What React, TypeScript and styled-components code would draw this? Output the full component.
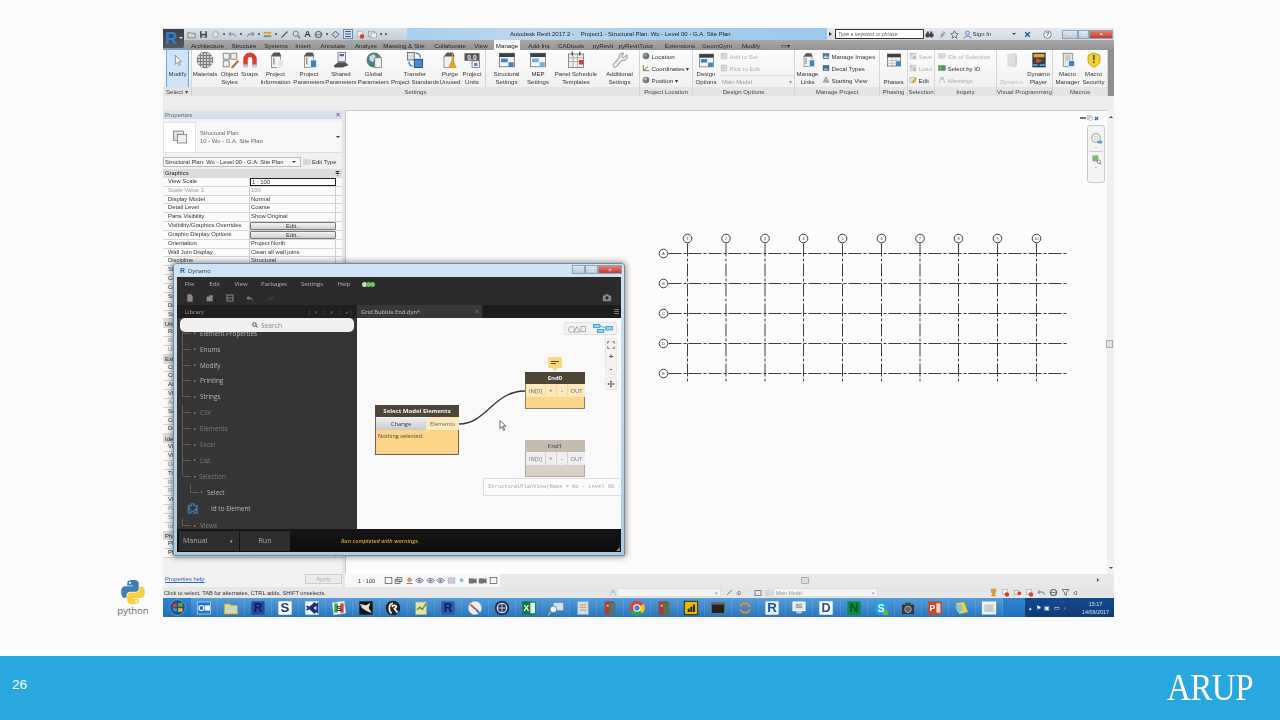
import React from 'react';
import styled, { createGlobalStyle } from 'styled-components';

const Global = createGlobalStyle`
  html, body { margin: 0; padding: 0; background: #fbfbfb; }
  #root { width: 1280px; height: 720px; overflow: hidden; }
  * { box-sizing: border-box; }
`;

const ui = `"Liberation Sans", Arial, sans-serif`;
const dyn = `"Open Sans", "Liberation Sans", sans-serif`;

const Slide = styled.div`display:flex;flex-direction:column;width:1280px;height:720px;background:#fbfbfb;font-family:${ui};`;
const Stage = styled.div`flex:1;display:flex;padding-top:28px;min-height:0;`;
const Brand = styled.div`width:163px;flex:none;align-self:flex-end;margin-bottom:39px;padding-left:103px;display:flex;flex-direction:column;align-items:center;`;
const BrandWord = styled.span`font:9.5px/12px "Open Sans",sans-serif;color:#666;margin-top:1px;width:60px;text-align:center;`;
const Footer = styled.div`height:64px;flex:none;background:#29a8e0;display:flex;align-items:center;justify-content:space-between;padding:0 27px 0 12px;color:#fff;`;
const PageNo = styled.span`font:13.5px/16px ${ui};margin-top:-6px;`;
const Arup = styled.span`font:33px/36px "Liberation Serif",serif;letter-spacing:-.5px;display:block;transform:scaleY(1.12);`;

const Shot = styled.div`position:relative;width:951px;height:589px;display:flex;flex-direction:column;filter:blur(.5px);font-size:5.6px;color:#333;background:#f0f0f0;overflow:hidden;`;

/* title bar */
const TitleBar = styled.div`height:12px;flex:none;display:flex;align-items:center;background:linear-gradient(#d9e2ea,#c3ced8);`;
const AppButton = styled.div`position:absolute;left:0;top:1px;width:21px;height:19px;background:linear-gradient(#3c4046,#555a60);border-radius:0 0 2px 0;color:#2f7fd0;font:bold 17px/19px ${ui};padding-left:2px;z-index:2;`;
const AppCaret = styled.span`position:absolute;right:1px;top:8px;border:2px solid transparent;border-top-color:#ddd;`;
const Quick = styled.div`width:244px;padding-left:24px;flex:none;display:flex;align-items:center;gap:3.1px;`;
const QuickDot = styled.span`width:2px;height:2px;background:#667;flex:none;`;
const QuickA = styled.span`font:bold 9px/9px ${ui};color:#333;flex:none;`;
const Glass = styled.div`width:420px;flex:none;height:12px;background:linear-gradient(90deg,#a7cff0,#bcd8ee 30%,#a8cfee 55%,#9cc8ec 100%);display:flex;align-items:center;padding-left:103px;font-size:6px;color:#222;white-space:pre;`;
const SearchWrap = styled.div`flex:1;display:flex;align-items:center;background:linear-gradient(#e4e9ee,#d4dbe2);height:12px;padding-left:2px;`;
const SearchArrow = styled.span`border:2px solid transparent;border-left:3px solid #333;flex:none;`;
const SearchBox = styled.div`width:89px;height:10px;background:#fff;border:1px solid #333;margin-left:1px;font:italic 5.2px/8px ${ui};color:#666;padding-left:2px;flex:none;`;
const TopIcons = styled.div`display:flex;align-items:center;gap:3.5px;margin-left:1px;flex:none;`;
const SignIn = styled.span`font-size:6px;margin:0 21px 0 1px;white-space:nowrap;flex:none;`;
const TinyCaret = styled.span`border:2px solid transparent;border-top-color:#444;margin:2px 8px 0 0;flex:none;`;
const Spacer = styled.span<{ $w: number }>`width:${p => p.$w}px;flex:none;`;
const WinButtons = styled.div`display:flex;margin-left:10px;height:9px;flex:none;`;
const WinBtn = styled.span<{ $w: number; $red?: boolean }>`display:flex;align-items:center;justify-content:center;width:${p => p.$w}px;font-size:6px;color:#fff;border:1px solid #8ea4b8;background:${p => p.$red ? 'linear-gradient(#e08070,#c73b2c)' : 'linear-gradient(#dfe8f0,#b8c8d6)'};`;

/* tabs */
const TabBar = styled.div`height:10px;flex:none;display:flex;padding-left:26px;background:linear-gradient(#a9a9a9,#939393);`;
const Tab = styled.div<{ $w: number; $on?: boolean; $ml?: number }>`width:${p => p.$w}px;margin-left:${p => p.$ml || 0}px;display:flex;justify-content:center;align-items:center;white-space:nowrap;font-size:6.2px;color:#222;background:${p => p.$on ? '#f6f6f6' : 'transparent'};`;

/* ribbon */
const Ribbon = styled.div`height:46px;flex:none;display:flex;background:#f4f4f4;`;
const RibbonEnd = styled.div`flex:1;background:#8f8f8f;`;
const Panel = styled.div<{ $w: number }>`width:${p => p.$w}px;flex:none;display:flex;flex-direction:column;border-right:1px solid #d4d4d4;`;
const PanelBody = styled.div`height:37px;flex:none;display:flex;background:linear-gradient(#fcfcfc,#f0f0f0);`;
const PanelTitle = styled.div<{ $left?: boolean }>`flex:1;background:#e4e4e4;display:flex;align-items:center;justify-content:${p => p.$left ? 'flex-start' : 'center'};padding-left:${p => p.$left ? 3 : 0}px;font-size:6.1px;color:#444;white-space:nowrap;`;
const BigBtn = styled.div<{ $w: number; $active?: boolean; $off?: boolean; $ml?: number; $sep?: boolean }>`
  width:${p => p.$w}px;flex:none;margin-left:${p => p.$ml || 0}px;display:flex;flex-direction:column;align-items:center;
  background:${p => p.$active ? '#cfe5f7' : 'transparent'};
  outline:${p => p.$active ? '1px solid #5fa6dd' : 'none'};
  color:${p => p.$off ? '#aaa' : '#333'};
  opacity:${p => p.$off ? .75 : 1};
`;
const BigIcon = styled.div`height:20px;flex:none;display:flex;align-items:center;justify-content:center;`;
const BigLabel = styled.div`font-size:6.05px;line-height:8px;text-align:center;white-space:pre;`;
const RibbonSep = styled.div`width:1px;flex:none;background:#d4d4d4;margin:0 0 0 1px;`;
const SmallCol = styled.div<{ $w: number; $ml?: number }>`width:${p => p.$w}px;margin-left:${p => p.$ml || 0}px;flex:none;display:flex;flex-direction:column;`;
const SmallRow = styled.div<{ $off?: boolean }>`height:12px;display:flex;align-items:center;gap:1.5px;white-space:nowrap;font-size:6.1px;color:${p => p.$off ? '#b0b0b0' : '#333'};`;
const Combo = styled.div<{ $off?: boolean }>`height:9px;margin-top:1px;flex:1;display:flex;justify-content:space-between;align-items:center;padding:0 2px;background:#f2f2f2;border-top:1px solid #ddd;font-size:5.8px;color:#999;`;
const Band = styled.div`height:14px;flex:none;background:#ededed;`;

/* workspace */
const Work = styled.div`height:477px;flex:none;display:flex;background:#e8e8e8;`;
const Props = styled.div`width:179px;flex:none;display:flex;flex-direction:column;background:#f1f1f1;font-size:5.9px;`;
const PropsHead = styled.div`height:9px;flex:none;display:flex;justify-content:space-between;align-items:center;padding:0 2px 0 2px;background:linear-gradient(#dde6ef,#cfdbe8);color:#667;font-size:6px;`;
const TypeBox = styled.div`height:31px;margin-top:3px;flex:none;display:flex;align-items:center;background:#f7f7f7;border-bottom:1px solid #ddd;`;
const TypeThumb = styled.div`width:33px;height:31px;flex:none;background:#fff;display:flex;align-items:center;justify-content:center;border:1px solid #e4e4e4;`;
const TypeText = styled.div`flex:1;padding-left:4px;font-size:5.9px;line-height:8px;color:#666;`;
const Caret = styled.span`border:2px solid transparent;border-top-color:#333;margin:2px 2px 0 0;`;
const TypeRow = styled.div`height:12px;margin-top:3px;flex:none;display:flex;align-items:center;`;
const TypeSelect = styled.div`width:138px;height:10px;padding:0 2px 0 1px;display:flex;justify-content:space-between;align-items:center;border:1px solid #bbb;background:#f8f8f8;font-size:5.8px;white-space:nowrap;`;
const EditType = styled.div`margin-left:2px;display:flex;align-items:center;gap:1px;white-space:nowrap;`;
const PropList = styled.div`flex:1;margin-top:1px;min-height:0;overflow:hidden;`;
const Head = styled.div`height:8.85px;display:flex;justify-content:space-between;align-items:center;padding:0 2px;background:#dcdcdc;font-size:5.9px;color:#222;`;
const Row = styled.div`height:8.85px;display:grid;grid-template-columns:86px 86px 1fr;padding-left:1px;border-bottom:1px solid #d6d6d6;background:#fbfbfb;`;
const PropKey = styled.div<{ $dim?: boolean }>`padding-left:4px;line-height:7.8px;white-space:nowrap;overflow:hidden;color:${p => p.$dim ? '#999' : '#333'};border-right:1px solid #cfcfcf;`;
const PropVal = styled.div<{ $dim?: boolean; $kind?: string }>`
  padding-left:1px;line-height:7.6px;white-space:nowrap;overflow:hidden;color:${p => p.$dim ? '#999' : '#333'};border-right:1px solid #cfcfcf;
  ${p => p.$kind === 'input' ? 'border:1px solid #222;background:#fff;' : ''}
  ${p => p.$kind === 'btn' ? 'border:1px solid #777;border-radius:1px;background:linear-gradient(#f4f4f4,#cfcfcf);text-align:center;' : ''}
`;
const PropFoot = styled.div`height:14px;flex:none;display:flex;justify-content:space-between;align-items:center;padding:0 0 2px 2px;`;
const HelpLink = styled.span`color:#2a62b8;text-decoration:underline;font-size:5.9px;`;
const Apply = styled.span`width:37px;height:10px;border:1px solid #ccc;background:#ececec;color:#aaa;text-align:center;line-height:8px;font-size:5.8px;`;
const Split = styled.div`width:3px;flex:none;background:#e6e6e6;`;
const View = styled.div`flex:1;min-width:0;display:flex;flex-direction:column;`;
const CanvasRow = styled.div`flex:1;min-height:0;display:flex;`;
const Canvas = styled.div`flex:1;position:relative;background:#fcfcfc;border:1px solid #c8c8c8;border-width:1px 0 0 1px;`;
const VScroll = styled.div`width:7px;flex:none;position:relative;background:#f0f0f0;`;
const VThumb = styled.div`position:absolute;left:-1px;top:230px;width:7px;height:8px;background:#ddd;border:1px solid #aaa;`;
const ArrowUp = styled.span`position:absolute;left:1.5px;top:4px;border:2px solid transparent;border-bottom-color:#444;`;
const ArrowDn = styled.span`position:absolute;left:1.5px;bottom:3px;border:2px solid transparent;border-top-color:#444;`;
const MiniCtl = styled.div`position:absolute;left:734px;top:4px;display:flex;gap:1px;align-items:center;`;
const MiniBar = styled.span`width:6px;height:2px;background:#777;`;
const NavBar = styled.div`position:absolute;left:741px;top:14px;width:18px;height:58px;background:#f4f4f4;border:1px solid #c8c8c8;border-radius:3px;display:flex;flex-direction:column;align-items:center;padding-top:6px;`;
const NavSep = styled.div`width:14px;height:1px;background:#ccc;margin:2px 0;`;
const NavCaret = styled.span`border:1.5px solid transparent;border-top-color:#888;margin-top:2px;`;
const ViewBar = styled.div`height:13px;flex:none;display:flex;align-items:center;`;
const ViewCtl = styled.div`width:155px;flex:none;height:13px;display:flex;align-items:center;background:#f8f8f8;padding-left:13px;gap:1.5px;font-size:5.6px;white-space:nowrap;`;
const ScaleText = styled.span`margin-right:7px;`;
const HTrack = styled.div`flex:1;height:13px;background:#e8e8e8;display:flex;align-items:center;position:relative;`;
const HThumb = styled.div`position:absolute;left:301px;top:3px;width:8px;height:7px;background:#ddd;border:1px solid #aaa;border-radius:1px;`;
const HRight = styled.span`position:absolute;right:13px;top:4px;border:2px solid transparent;border-left-color:#444;`;

/* status */
const Status = styled.div`height:11px;flex:none;display:flex;align-items:center;background:#e6e6e6;font-size:5.7px;color:#333;white-space:nowrap;`;
const StatusText = styled.div`width:446px;padding-left:1px;flex:none;`;
const StatusCombo = styled.div<{ $w: number }>`width:${p => p.$w}px;height:9px;display:flex;justify-content:space-between;align-items:center;padding:0 2px;background:#f4f4f4;border:1px solid #ddd;font-size:5.2px;color:#999;flex:none;`;
const StatusIcons = styled.div<{ $ml?: number }>`display:flex;align-items:center;gap:3px;margin-left:${p => p.$ml || 0}px;`;

/* taskbar */
const Taskbar = styled.div`height:19px;flex:none;display:flex;background:linear-gradient(#2f86cf,#1f70bd);`;
const Start = styled.div`width:28px;flex:none;display:flex;align-items:center;justify-content:center;`;
const TaskIcons = styled.div`display:flex;width:834px;flex:none;`;
const TaskSlot = styled.div`width:27.07px;flex:none;display:flex;align-items:center;justify-content:center;border-right:1px solid rgba(255,255,255,.1);background:linear-gradient(rgba(255,255,255,.18),rgba(255,255,255,.04));`;
const Tray = styled.div`flex:1;display:flex;align-items:center;gap:3.5px;padding-left:4px;background:linear-gradient(#134a8c,#0f3c78);color:#fff;font-size:6px;`;
const TrayRed = styled.span`color:#e85a40;`;
const Clock = styled.div`margin-left:auto;padding-right:5px;font-size:5.4px;line-height:8px;text-align:center;color:#dfe8f4;`;

/* dynamo */
const DynWin = styled.div`position:absolute;left:10px;top:235px;width:452px;height:293px;display:flex;flex-direction:column;padding:0 3px 3px;background:linear-gradient(#cfe4f6,#a8cbe6);border:1px solid #6f8ba3;border-radius:3px 3px 1px 1px;box-shadow:0 0 6px 1px rgba(0,0,0,.45);font-family:${dyn};z-index:3;`;
const DynTitle = styled.div`height:13px;flex:none;display:flex;align-items:center;gap:3px;padding-left:3px;font-size:5.8px;color:#333;`;
const DynR = styled.span`color:#2467b0;font:bold 7px/8px ${ui};`;
const DynBtns = styled.div`margin-left:auto;display:flex;height:9px;margin-top:-2px;margin-right:-1px;`;
const DynMenu = styled.div`height:14px;flex:none;background:#2b2b2b;position:relative;display:flex;align-items:center;color:#b4b4b4;font-size:6px;`;
const MenuItem = styled.span<{ $w: number }>`width:${p => p.$w}px;flex:none;text-align:center;`;
const Status2 = styled.span`display:flex;margin-left:5px;`;
const Dot = styled.span<{ $c: string }>`width:5px;height:5px;border-radius:50%;background:${p => p.$c};margin-right:-1px;`;
const DynTools = styled.div`height:14px;flex:none;background:#2b2b2b;display:flex;align-items:center;padding:0 9px;gap:12px;`;
const ToolEnd = styled.span`margin-left:auto;`;
const DynMain = styled.div`flex:1;min-height:0;display:flex;`;
const Library = styled.div`width:180px;flex:none;background:#353535;display:flex;flex-direction:column;`;
const LibHead = styled.div`height:13px;flex:none;background:#1f1f1f;display:flex;align-items:center;justify-content:space-between;padding:0 3px 0 8px;font-size:5.8px;color:#a0a0a0;`;
const LibTools = styled.span`color:#666;font-size:5.4px;letter-spacing:1.5px;`;
const LibSearch = styled.div`height:14px;flex:none;margin:0 3px;background:#f0f0f0;border-radius:5px;display:flex;align-items:center;justify-content:center;gap:3px;font-size:6.6px;color:#888;z-index:1;`;
const LibList = styled.div`flex:1;min-height:0;overflow:hidden;padding-top:0;`;
const TreeGroup = styled.div<{ $n: number; $mt?: number }>`margin-left:5px;margin-top:${p => p.$mt || 0}px;height:${p => p.$n * 15.9 - 7.9}px;border-left:1px solid #5c5c5c;`;
const TreeItem = styled.div<{ $dim?: boolean; $lv?: number }>`
  height:15.9px;display:flex;align-items:center;font-size:6.4px;white-space:nowrap;color:${p => p.$dim ? '#7c7c7c' : '#b8b8b8'};padding-left:${p => p.$lv || 0}px;
  &::before{content:'';width:8px;height:1px;background:#5c5c5c;flex:none;margin-right:3px;}
`;
const Tri = styled.span<{ $open?: boolean }>`flex:none;margin-right:3px;margin-top:${p => p.$open ? 2 : 0}px;border:1.5px solid transparent;${p => p.$open ? 'border-top-color:#999;border-top-width:2px;' : 'border-left-color:#999;border-left-width:2px;'}`;
const LeafRow = styled.div`height:17.5px;display:flex;align-items:center;padding-left:10px;gap:13px;font-size:6.4px;color:#b8b8b8;`;
const SubGroup = styled.div`height:15.9px;margin-left:13px;margin-top:7.9px;display:flex;align-items:center;font-size:6.4px;color:#b8b8b8;`;
const SubStub = styled.span`width:9px;height:9px;margin:-7px 2px 0 0;border:solid #5c5c5c;border-width:0 0 1px 1px;flex:none;`;
const DynCanvasCol = styled.div`flex:1;min-width:0;display:flex;flex-direction:column;`;
const DynTabs = styled.div`height:13px;flex:none;display:flex;align-items:center;background:#1d1d1d;`;
const DynTab = styled.div`width:125px;height:13px;background:#383838;display:flex;align-items:center;justify-content:space-between;padding:0 3px 0 4px;font-size:5.7px;font-weight:600;color:#b0b0b0;`;
const TabClose = styled.span`font-size:7px;color:#777;`;
const Burger = styled.span`margin-left:auto;margin-right:2px;width:5px;height:5px;border:solid #777;border-width:1px 0;position:relative;&::after{content:'';position:absolute;left:0;right:0;top:1px;height:1px;background:#777;}`;
const Graph = styled.div`flex:1;position:relative;background:#f9f9f9;min-height:0;`;
const Wire = styled.svg`position:absolute;left:0;top:0;width:264px;height:212px;pointer-events:none;`;
const Node = styled.div<{ $x: number; $y: number; $w: number; $h: number; $bg: string; $line: string }>`position:absolute;left:${p => p.$x}px;top:${p => p.$y}px;width:${p => p.$w}px;height:${p => p.$h}px;background:${p => p.$bg};border:1px solid ${p => p.$line};display:flex;flex-direction:column;`;
const NodeHead = styled.div<{ $bg: string; $c: string; $bold?: boolean }>`height:12px;flex:none;margin:-1px -1px 0;background:${p => p.$bg};color:${p => p.$c};font-size:6px;font-weight:${p => p.$bold ? 700 : 600};display:flex;align-items:center;justify-content:center;white-space:nowrap;`;
const NodePorts = styled.div`height:13px;flex:none;display:flex;font-size:5.8px;`;
const Port = styled.div<{ $w: number; $bg: string; $c: string; $ml?: number }>`width:${p => p.$w}px;margin-left:${p => p.$ml || 0}px;background:${p => p.$bg};color:${p => p.$c};display:flex;align-items:center;justify-content:center;flex:none;white-space:nowrap;`;
const ChangeBtn = styled.div`width:50px;flex:none;background:linear-gradient(#f1f1f1,#c9c9c9);display:flex;align-items:center;justify-content:center;color:#333;font-size:5.8px;`;
const NodeNote = styled.div`padding:2px;font-size:5.6px;color:#444;`;
const Bubble = styled.div`position:absolute;left:191px;top:39px;width:14px;height:11px;background:#f9d87e;border-radius:1px;display:flex;flex-direction:column;justify-content:center;padding-left:3px;gap:1px;&::after{content:'';position:absolute;left:4px;top:11px;border:3px solid transparent;border-top-color:#f9d87e;}`;
const BubbleLine = styled.span<{ $w: number }>`display:block;height:1px;width:${p => p.$w}px;background:#5b4a20;`;
const Preview = styled.div`position:absolute;left:126px;top:160px;width:138px;height:18px;background:#fbfbfb;border:1px solid #ddd;border-right:0;display:flex;align-items:center;padding-left:4px;font:5.4px "Liberation Mono",monospace;color:#a8a8a8;white-space:nowrap;overflow:hidden;`;
const CursorMark = styled.svg`position:absolute;left:142px;top:102px;`;
const ToggleBar = styled.div`position:absolute;left:207px;top:4px;width:53px;height:13px;background:#f2f2f2;border:1px solid #e2e2e2;border-radius:2px;display:flex;align-items:center;justify-content:space-around;`;
const ZoomCol = styled.div<{ $y: number; $h: number }>`position:absolute;left:248px;top:${p => p.$y}px;width:12px;height:${p => p.$h}px;background:#f2f2f2;border:1px solid #e6e6e6;border-radius:2px;display:flex;flex-direction:column;align-items:center;justify-content:space-around;color:#555;font:bold 8px/9px ${ui};`;
const DynBottom = styled.div`height:23px;flex:none;background:linear-gradient(#161616,#0d0d0d);display:flex;align-items:center;padding:0 0 0 2px;position:relative;`;
const ManualBtn = styled.div`width:60px;height:20px;background:#2e2e2e;display:flex;align-items:center;justify-content:space-between;padding:0 6px 0 4px;font-size:7px;color:#aaa;`;
const SmallGlyph = styled.span`font-size:5px;`;
const RunBtn = styled.div`width:50px;height:20px;margin-left:1px;background:#2e2e2e;display:flex;align-items:center;justify-content:center;font-size:7px;color:#aaa;`;
const RunMsg = styled.span`margin-left:51px;font-size:5.7px;font-style:italic;font-weight:600;color:#e8a41c;white-space:nowrap;`;
const Grip = styled.svg`position:absolute;right:0;bottom:0;`;

/* icons */
const dots: React.ReactNode[] = [];
for (let i = 0; i < 5; i++) for (let j = 0; j < 5; j++) dots.push(<circle key={`${i}-${j}`} cx={4 + i * 4} cy={4 + j * 4} r={1.3} fill="#e8e8e8" />);

const sheet = (tag: string) => (
  <>
    <path d="M5 7 L9 2 L17 2 L19 7 Z" fill="#555" />
    <rect x="6" y="7" width="12" height="15" fill="#f2f2f2" stroke="#777" />
    <rect x="8" y="9" width="2" height="9" fill="#999" />
    <rect x="14" y="12" width="8" height="10" fill={tag} stroke="#fff" strokeWidth=".8" />
  </>
);
const dialog = (c: string) => (
  <>
    <rect x="2" y="3" width="20" height="18" fill="#f4f4f4" stroke="#666" />
    <rect x="2" y="3" width="20" height="5" fill="#3a3f46" />
    <rect x="4" y="10" width="9" height="5" fill={c} />
    <rect x="14" y="15" width="7" height="6" fill={c} />
  </>
);
const ICONS: Record<string, React.ReactNode> = {
  cursor: <path d="M8 2 L8 19 L12 15 L15 21 L17.5 20 L14.5 14 L19 14 Z" fill="#fff" stroke="#6b7d90" strokeWidth="1.4" />,
  materials: <><circle cx="12" cy="12" r="11" fill="#7c7c7c" />{dots}</>,
  styles: <><path d="M3 3h8v8H3zM13 3h8v8h-8zM3 13h8v8H3z" fill="#eee" stroke="#666" /><path d="M13 22 L22 12 L24 14 L16 23z" fill="#a6703c" /></>,
  magnet: <><path d="M3 21V11a9 9 0 0 1 18 0v10h-6V11a3 3 0 0 0-6 0v10z" fill="#d6402f" /><rect x="3" y="18" width="6" height="4" fill="#ccc" /><rect x="15" y="18" width="6" height="4" fill="#ccc" /></>,
  info: sheet('#d8e8f6'),
  param: sheet('#3d83c6'),
  shared: <><rect x="8" y="2" width="10" height="12" fill="#eee" stroke="#668" /><rect x="10" y="4" width="6" height="3" fill="#3d6fa8" /><path d="M2 20 L8 15 H18 L22 19 L14 22 H4Z" fill="#4b5158" /></>,
  global: <><circle cx="12" cy="12" r="10" fill="#4f7f88" /><path d="M6 7 l6-3 3 5-5 6-4-3z" fill="#cdd8d8" /><rect x="13" y="9" width="9" height="13" fill="#efefef" stroke="#777" /></>,
  transfer: <><rect x="2" y="2" width="9" height="10" fill="#ddd" stroke="#555" /><rect x="11" y="11" width="11" height="11" fill="#3f8fd0" stroke="#226" /><path d="M13 3 C18 3 19 5 19 9 M4 14 C4 18 6 20 9 20" fill="none" stroke="#3f8fd0" strokeWidth="2" /></>,
  purge: <><path d="M4 7 L8 2 L16 2 L18 7 Z" fill="#555" /><rect x="4" y="7" width="13" height="15" fill="#f2f2f2" stroke="#777" /><path d="M15 3 L15 13 M11 22 L15 12 L20 22 Z" stroke="#d99a1e" fill="#e6a92a" strokeWidth="1.5" /></>,
  units: <><rect x="2" y="3" width="20" height="10" fill="#555" /><text x="12" y="11.5" textAnchor="middle" fontSize="9" fontWeight="700" fill="#eee" fontFamily="Liberation Sans">0.0</text><rect x="12" y="13" width="10" height="9" fill="#eee" stroke="#667" /><rect x="15" y="16" width="4" height="4" fill="#3d83c6" /></>,
  dlgBlue: dialog('#3d83c6'),
  dlgLight: dialog('#6fb0e4'),
  schedule: <><rect x="2" y="4" width="20" height="18" fill="#f0eee8" stroke="#666" /><path d="M2 9h20M2 14h20M8 4v18M14 4v18" stroke="#999" /><rect x="6" y="1" width="2" height="5" fill="#555" /><rect x="16" y="1" width="2" height="5" fill="#555" /><rect x="16" y="12" width="6" height="6" fill="#d6402f" /></>,
  wrench: <path d="M21 5 L17 9 L14 7 L17 3 C13 2 10 5 11 9 L3 18 C2 20 5 23 7 21 L15 12 C19 14 23 10 21 5 Z" fill="#f0f0f0" stroke="#777" strokeWidth="1.2" />,
  location: <><circle cx="12" cy="12" r="10" fill="#4f7f88" /><path d="M6 7 l6-3 3 5-5 6-4-3z" fill="#d98c44" /></>,
  coords: <path d="M4 3 V20 H22" fill="none" stroke="#3aa24a" strokeWidth="3" />,
  coordsR: <path d="M4 20 L18 8" fill="none" stroke="#d6402f" strokeWidth="3" />,
  position: <><circle cx="12" cy="12" r="10" fill="#777" /><path d="M5 7 l7-3 3 5-5 6-4-3z" fill="#bbb" /></>,
  addset: <><rect x="3" y="3" width="18" height="18" fill="#ddd" stroke="#aaa" /><path d="M3 9h18M9 3v18" stroke="#aaa" /></>,
  picture: <><rect x="3" y="4" width="18" height="16" fill="#4a80b0" stroke="#345" /><path d="M4 18 L10 10 L15 16 L18 13 L21 18z" fill="#cfe0ee" /></>,
  decal: <><rect x="3" y="4" width="18" height="16" fill="#3d6f98" stroke="#345" /><path d="M4 18 L10 11 L20 18z" fill="#9fc0da" /></>,
  camera2: <path d="M3 20 L12 4 L21 20 M6 13 L18 20 M18 12 L7 20" fill="none" stroke="#666" strokeWidth="2.4" />,
  phases: <><rect x="2" y="3" width="20" height="18" fill="#f6f6f6" stroke="#555" /><rect x="2" y="3" width="20" height="5" fill="#3a3f46" /><path d="M2 13h20M2 17h20M9 8v13M15 8v13" stroke="#aaa" /><rect x="15" y="14" width="7" height="7" fill="#3d83c6" /></>,
  save: <><rect x="3" y="3" width="8" height="8" fill="#ccc" stroke="#aaa" /><rect x="13" y="3" width="8" height="8" fill="#ddd" stroke="#bbb" /><rect x="3" y="13" width="8" height="8" fill="#ddd" stroke="#bbb" /><rect x="13" y="13" width="8" height="8" fill="#bbb" stroke="#aaa" /></>,
  edit: <><rect x="3" y="5" width="17" height="15" fill="#dfe7c9" stroke="#6d7d3e" /><path d="M8 19 L20 5 L23 8 L12 21z" fill="#d9852c" /></>,
  ids: <><rect x="2" y="5" width="20" height="14" fill="#ddd" stroke="#bbb" /><path d="M2 12h20M8 5v14" stroke="#bbb" /></>,
  selId: <><rect x="2" y="5" width="20" height="14" fill="#3f8f52" stroke="#2b6a3a" /><path d="M2 12h20M8 5v14" stroke="#bfe3c8" /></>,
  warn: <path d="M4 21 L9 3 L12 12 L15 3 L20 21" fill="none" stroke="#bbb" strokeWidth="2.5" />,
  dynamo: <><path d="M5 3 L17 1 L19 4 V20 L17 23 L5 21 Z" fill="#d4d4d4" /><path d="M17 1 L19 4 V20 L17 23Z" fill="#bbb" /></>,
  player: <><rect x="2" y="1" width="20" height="22" fill="#33404c" /><rect x="4" y="3" width="16" height="5" fill="#e6a526" /><path d="M8 9 L18 13 L8 17Z" fill="#e2432f" /><rect x="3" y="18" width="7" height="3" fill="#3d9ad6" /><rect x="13" y="18" width="8" height="3" fill="#3d9ad6" /></>,
  macro: <><path d="M4 2 H19 V17 C19 20 17 22 15 22 H5 V6 C5 4 4 3 4 2Z" fill="#e8e8e8" stroke="#666" /><path d="M8 6h8M8 9h8M8 12h8" stroke="#888" /><rect x="13" y="13" width="9" height="9" fill="#3d83c6" stroke="#fff" /></>,
  shield: <><path d="M12 1 L21 5 V13 C21 18 16 21 12 23 C8 21 3 18 3 13 V5 Z" fill="#f4d030" stroke="#a78a10" /><text x="12" y="17" textAnchor="middle" fontSize="15" fontWeight="700" fill="#333" fontFamily="Liberation Sans">!</text></>,
  folder: <><path d="M2 7 H9 L11 9 H22 V21 H2Z" fill="#d8d8d0" stroke="#555" strokeWidth="1.6" /></>,
  disk: <><rect x="3" y="3" width="18" height="18" fill="#3d4650" /><rect x="7" y="3" width="10" height="7" fill="#dfe4e8" /><rect x="7" y="14" width="10" height="7" fill="#aeb6bd" /></>,
  sync: <><circle cx="12" cy="12" r="9" fill="#c9cfd4" stroke="#8a9298" /><rect x="9" y="9" width="6" height="6" fill="#eef" /></>,
  dim: <><rect x="3" y="5" width="18" height="14" fill="#ccd" stroke="#889" /></>,
  undo: <path d="M20 18 C19 11 13 9 7 11 M7 6 L3 11 L8 15" fill="none" stroke="#7a8794" strokeWidth="3" />,
  redo: <path d="M4 18 C5 11 11 9 17 11 M17 6 L21 11 L16 15" fill="none" stroke="#7a8794" strokeWidth="3" />,
  line: <path d="M4 20 L20 4" stroke="#555" strokeWidth="3" />,
  mag: <><circle cx="10" cy="10" r="7" fill="none" stroke="#777" strokeWidth="2.4" /><path d="M15 15 L22 22" stroke="#777" strokeWidth="3" /></>,
  thick: <><rect x="2" y="5" width="20" height="5" fill="#d9a321" /><rect x="2" y="14" width="20" height="5" fill="#888" /></>,
  gear: <><circle cx="12" cy="12" r="8" fill="none" stroke="#666" strokeWidth="3" /><path d="M2 12h20" stroke="#666" strokeWidth="2" /></>,
  diamond: <path d="M12 3 L21 12 L12 21 L3 12Z" fill="none" stroke="#444" strokeWidth="2.4" />,
  switch: <><rect x="1" y="1" width="22" height="22" fill="#cfe4f6" stroke="#3d83c6" strokeWidth="2" /><path d="M5 6h14M5 12h14M5 18h14" stroke="#333" strokeWidth="2" /></>,
  delete: <><rect x="3" y="3" width="14" height="14" fill="#eee" stroke="#777" /><circle cx="16" cy="17" r="6" fill="#d6402f" /></>,
  windows: <><rect x="2" y="3" width="15" height="14" fill="#ddd" stroke="#666" /><rect x="8" y="8" width="14" height="13" fill="#eee" stroke="#666" /></>,
  binocs: <><circle cx="7" cy="14" r="6" fill="#444" /><circle cx="17" cy="14" r="6" fill="#444" /><rect x="5" y="4" width="5" height="8" fill="#444" /><rect x="14" y="4" width="5" height="8" fill="#444" /></>,
  sat: <path d="M6 20 L12 14 M12 8 A4 4 0 1 1 8 14 Z M14 4 L20 10" stroke="#666" strokeWidth="2" fill="#ddd" />,
  star: <path d="M12 2 L15 9 L22 10 L17 15 L18 22 L12 18 L6 22 L7 15 L2 10 L9 9Z" fill="none" stroke="#555" strokeWidth="2" />,
  person: <><circle cx="12" cy="8" r="5" fill="none" stroke="#4a7bb0" strokeWidth="2.4" /><path d="M2 22 C4 15 20 15 22 22" fill="none" stroke="#4a7bb0" strokeWidth="2.4" /></>,
  xx: <path d="M4 4 L20 20 M20 4 L4 20" stroke="#1c5a9a" strokeWidth="5" />,
  help: <><circle cx="12" cy="12" r="10" fill="#eee" stroke="#667" strokeWidth="2" /><text x="12" y="17" textAnchor="middle" fontSize="14" fill="#2a5ea8" fontFamily="Liberation Sans" fontWeight="700">?</text></>,
  plan: <><rect x="3" y="4" width="18" height="16" fill="none" stroke="#555" strokeWidth="2" /></>,
  layers: <><rect x="3" y="9" width="13" height="11" fill="#eee" stroke="#555" strokeWidth="2" /><rect x="8" y="4" width="13" height="11" fill="none" stroke="#555" strokeWidth="2" /></>,
  sun: <><circle cx="12" cy="10" r="5" fill="#e9b93c" stroke="#c14" strokeWidth="1.4" /><path d="M4 20h16" stroke="#555" strokeWidth="2" /></>,
  blueEye: <><path d="M2 12 C8 4 16 4 22 12 C16 20 8 20 2 12Z" fill="#cdddf0" stroke="#2a5ea8" strokeWidth="2" /><circle cx="12" cy="12" r="3" fill="#c8392b" /></>,
  car: <path d="M3 7 H15 V19 H3Z M15 10 L22 7 V19 L15 16" fill="#777" stroke="#333" />,
  bulb: <circle cx="12" cy="11" r="4" fill="#8cc3ea" stroke="#3c78ac" />,
  filter: <path d="M3 4 H21 L14 13 V20 L10 18 V13Z" fill="none" stroke="#555" strokeWidth="2" />,
  redBox: <><rect x="3" y="6" width="12" height="12" fill="#e8e8e8" stroke="#667" /><circle cx="17" cy="14" r="5" fill="#d6402f" /></>,
  trophy: <path d="M6 3 H18 V10 C18 14 14 15 14 15 V19 H17 V21 H7 V19 H10 V15 C10 15 6 14 6 10Z" fill="#dca52a" stroke="#8a6615" />,
  navWheel: <><circle cx="11" cy="11" r="8" fill="none" stroke="#bdbdbd" strokeWidth="3" /><circle cx="11" cy="11" r="3" fill="none" stroke="#cfcfcf" strokeWidth="2" /><rect x="13" y="16" width="10" height="5" rx="2" fill="#5a9bd8" /></>,
  navZoom: <><rect x="3" y="3" width="13" height="13" fill="#7fb573" /><circle cx="17" cy="17" r="4" fill="none" stroke="#888" strokeWidth="2" /><path d="M20 20l3 3" stroke="#888" strokeWidth="2" /></>,
  startOrb: <><circle cx="12" cy="12" r="11" fill="#1d4f8a" stroke="#9ac" /><path d="M6 7 L11 6 V11 L5 12Z" fill="#d9482f" /><path d="M13 6 L19 5 V11 L13 11Z" fill="#5ab03c" /><path d="M5 13 L11 13 V18 L6 17Z" fill="#3c91d9" /><path d="M13 13 L19 13 V18 L13 18Z" fill="#ecc020" /></>,
};

const Ic = ({ n, s = 8 }: { n: string; s?: number }) => (
  <svg width={s} height={s} viewBox="0 0 24 24" style={{ flex: 'none' }}>{ICONS[n]}</svg>
);
const Coords = () => (
  <svg width={8} height={8} viewBox="0 0 24 24" style={{ flex: 'none' }}>{ICONS.coords}{ICONS.coordsR}</svg>
);

/* taskbar tile icons */
const tile = (bg: string, c: string, t: string, size = 16, weight = 700) => (
  <><rect x="2" y="2" width="20" height="20" rx="1" fill={bg} /><text x="12" y="18" textAnchor="middle" fontFamily="Liberation Sans" fontSize={size} fontWeight={weight} fill={c}>{t}</text></>
);
const TASK: React.ReactNode[] = [
  <><rect x="2" y="3" width="20" height="18" fill="#2272c8" stroke="#cfe4f6" /><text x="8" y="17" textAnchor="middle" fontFamily="Liberation Sans" fontSize="13" fontWeight="700" fill="#fff">O</text><rect x="13" y="8" width="8" height="8" fill="#e8f2fa" /></>,
  <><path d="M2 6 H10 L12 8 H22 V21 H2Z" fill="#f1d679" stroke="#b79c3c" /><rect x="3" y="11" width="18" height="5" fill="#b9d6ec" /></>,
  tile('#254a9c', '#0e1e50', 'R', 18),
  tile('#fff', '#1a3a80', 'S', 20),
  <><rect x="2" y="2" width="20" height="20" fill="#fff" /><path d="M4 9 L8 12 L4 15 M20 6 V18 L12 12 Z M8 12 L17 4 M8 12 L17 20" fill="none" stroke="#1c2f7a" strokeWidth="3" /></>,
  <><rect x="3" y="3" width="18" height="18" fill="#fff" stroke="#ccc" transform="rotate(-8 12 12)" /><rect x="5" y="5" width="5" height="14" fill="#3aa24a" /><rect x="14" y="5" width="5" height="14" fill="#d6402f" /><text x="12" y="17" textAnchor="middle" fontSize="12" fontWeight="700" fontFamily="Liberation Sans" fill="#222">S</text></>,
  <><rect x="2" y="2" width="20" height="20" fill="#111" /><path d="M3 6 L12 8 L19 4 L16 12 L21 20 L12 16 L6 12Z" fill="#ddd" /></>,
  <><circle cx="12" cy="12" r="11" fill="#222" /><path d="M12 5 C5 6 5 16 10 20 M10 10 C16 6 20 10 14 13 L19 19" fill="none" stroke="#f2f2f2" strokeWidth="2.6" /></>,
  <><rect x="4" y="3" width="16" height="19" fill="#e9e3a8" stroke="#aa9" /><path d="M6 15 L10 11 L14 14 L20 5" fill="none" stroke="#4e9f3a" strokeWidth="2.4" /></>,
  tile('#3059a8', '#0e1e50', 'R', 18),
  <><circle cx="12" cy="12" r="10" fill="#eef2f5" stroke="#aab" /><path d="M5 7 L17 17" stroke="#d6402f" strokeWidth="2.4" /><path d="M14 15 L21 22" stroke="#3d83c6" strokeWidth="3" /></>,
  <><circle cx="12" cy="12" r="11" fill="#1e3460" /><circle cx="12" cy="12" r="7" fill="none" stroke="#dde" strokeWidth="1.8" /><path d="M12 5v14M5 12h14" stroke="#dde" strokeWidth="1.4" /></>,
  <><rect x="2" y="2" width="20" height="20" fill="#0f7a3c" /><rect x="14" y="4" width="7" height="16" fill="#dff0e4" /><text x="8" y="17" textAnchor="middle" fontSize="13" fontWeight="700" fontFamily="Liberation Sans" fill="#fff">X</text></>,
  <><rect x="8" y="4" width="15" height="12" fill="#cfe2f2" stroke="#789" /><circle cx="8" cy="14" r="5" fill="#eef" stroke="#567" /><path d="M4 18 L0 23" stroke="#e0b040" strokeWidth="2" /></>,
  <><rect x="4" y="2" width="16" height="20" fill="#cbdff0" stroke="#7fa3c4" /><path d="M7 7h10M7 11h10M7 15h10" stroke="#e09a30" strokeWidth="1.6" /></>,
  <><rect x="4" y="2" width="14" height="20" fill="#b33a3a" /><rect x="11" y="4" width="9" height="18" fill="#4c7a6a" /><rect x="7" y="7" width="3" height="3" fill="#e9c06b" /></>,
  <><circle cx="12" cy="12" r="11" fill="#dc4437" /><path d="M12 12 L2 18 A11 11 0 0 0 20 20Z" fill="#2da44e" /><path d="M12 12 L22 6 A11 11 0 0 1 20 20Z" fill="#f5c518" /><circle cx="12" cy="12" r="5.5" fill="#fff" /><circle cx="12" cy="12" r="4" fill="#3f84e5" /></>,
  <><rect x="4" y="2" width="14" height="20" fill="#a83a3a" /><rect x="11" y="4" width="9" height="18" fill="#5a6f4a" /><rect x="7" y="7" width="3" height="3" fill="#e9c06b" /></>,
  <><rect x="2" y="2" width="20" height="20" fill="#f0b800" stroke="#222" strokeWidth="1.4" /><rect x="7" y="13" width="3" height="5" fill="#222" /><rect x="11" y="10" width="3" height="8" fill="#222" /><rect x="15" y="7" width="3" height="11" fill="#222" /></>,
  <><rect x="2" y="4" width="20" height="16" fill="#222" stroke="#777" /><rect x="2" y="4" width="20" height="3" fill="#666" /></>,
  <path d="M5 10 C7 3 17 3 19 10 M5 14 C7 21 17 21 19 14" fill="none" stroke="#e98a2c" strokeWidth="3" />,
  tile('#e8f1f9', '#1c5aa0', 'R', 20),
  <><rect x="3" y="3" width="18" height="13" fill="#dfe6ee" stroke="#fff" strokeWidth="1.6" /><rect x="8" y="17" width="8" height="3" fill="#ccd" /><text x="12" y="12" textAnchor="middle" fontSize="7" fontFamily="Liberation Sans" fill="#444">5G</text></>,
  tile('#fff', '#1c4f9a', 'D', 19),
  tile('#0c8a4a', '#052', 'N', 19),
  <><circle cx="12" cy="12" r="10" fill="#12a5e8" /><text x="12" y="18" textAnchor="middle" fontSize="16" fontWeight="700" fontFamily="Liberation Sans" fill="#fff">S</text><circle cx="19" cy="19" r="4" fill="#6cb33f" /></>,
  <><rect x="3" y="7" width="18" height="14" fill="#333" /><rect x="8" y="4" width="8" height="4" fill="#444" /><circle cx="12" cy="14" r="5" fill="#666" stroke="#ccc" /></>,
  <><rect x="2" y="2" width="20" height="20" fill="#d0452b" /><rect x="14" y="5" width="6" height="14" fill="#f4d4c8" /><text x="8" y="17" textAnchor="middle" fontSize="13" fontWeight="700" fontFamily="Liberation Sans" fill="#fff">P</text></>,
  <><path d="M3 5 L15 3 L21 18 L8 21Z" fill="#f0d23c" /><path d="M2 10 L10 6 L14 15 L6 19Z" fill="#7cc4e8" /></>,
  <><rect x="2" y="3" width="20" height="18" fill="#e8ecf0" stroke="#fff" strokeWidth="1.4" /><rect x="5" y="7" width="14" height="11" fill="#c4ccd4" /></>,
];

const PythonLogo = () => (
  <svg width={24} height={24} viewBox="0 0 110 110" aria-label="Python">
    <path fill="#3f7cb0" d="M54.9 0c-4.6 0-9 .4-12.8 1.1C30.8 3.1 28.8 7.2 28.8 14.9v10.2h26.3v3.4H18.9c-7.6 0-14.3 4.6-16.4 13.3-2.4 10-2.5 16.2 0 26.6 1.9 7.8 6.3 13.3 13.9 13.3h9v-12c0-8.7 7.5-16.3 16.4-16.3h26.3c7.3 0 13.1-6 13.1-13.3V14.9c0-7.1-6-12.4-13.1-13.6C63.9.4 59.4 0 54.9 0zM40.7 8c2.7 0 4.9 2.3 4.9 5 0 2.7-2.2 4.9-4.9 4.9-2.7 0-4.9-2.2-4.9-4.9 0-2.8 2.2-5 4.9-5z" />
    <path fill="#f6cf45" transform="rotate(180 55 55.5)" d="M54.9 0c-4.6 0-9 .4-12.8 1.1C30.8 3.1 28.8 7.2 28.8 14.9v10.2h26.3v3.4H18.9c-7.6 0-14.3 4.6-16.4 13.3-2.4 10-2.5 16.2 0 26.6 1.9 7.8 6.3 13.3 13.9 13.3h9v-12c0-8.7 7.5-16.3 16.4-16.3h26.3c7.3 0 13.1-6 13.1-13.3V14.9c0-7.1-6-12.4-13.1-13.6C63.9.4 59.4 0 54.9 0zM40.7 8c2.7 0 4.9 2.3 4.9 5 0 2.7-2.2 4.9-4.9 4.9-2.7 0-4.9-2.2-4.9-4.9 0-2.8 2.2-5 4.9-5z" />
  </svg>
);

/* drawing */
const gridX = [687, 725.5, 764.5, 803, 842, 881, 919.5, 958, 997, 1036];
const gridY = [253, 283, 313, 343, 373];
const GridPlan = () => (
  <svg width={762} height={463} style={{ position: 'absolute', left: 0, top: 0 }} aria-label="Structural grid">
    <g transform="translate(-345.5 -110.5)" fill="none" stroke="#333" strokeWidth=".95">
      {gridX.map((x, i) => (
        <g key={x}>
          <line x1={x} x2={x} y1={243} y2={383} strokeDasharray="13 2 3 2" />
          <circle cx={x} cy={238} r={4.3} />
          <text x={x} y={239.6} textAnchor="middle" fontSize="3.8" fontFamily="Liberation Sans" fill="#444" stroke="none">{i + 1}</text>
        </g>
      ))}
      {gridY.map((y, i) => (
        <g key={y}>
          <line x1={668} x2={1068} y1={y} y2={y} strokeDasharray="13 2 3 2" />
          <circle cx={663} cy={y} r={4.3} />
          <text x={663} y={y + 1.5} textAnchor="middle" fontSize="3.8" fontFamily="Liberation Sans" fill="#444" stroke="none">{'ABCDE'[i]}</text>
        </g>
      ))}
    </g>
  </svg>
);

/* data */
const tabs: { t: string; w: number; on?: boolean; ml?: number }[] = [
  { t: 'Architecture', w: 37 }, { t: 'Structure', w: 36 }, { t: 'Systems', w: 28 }, { t: 'Insert', w: 26 },
  { t: 'Annotate', w: 34 }, { t: 'Analyze', w: 32 }, { t: 'Massing & Site', w: 44 }, { t: 'Collaborate', w: 48 },
  { t: 'View', w: 14 }, { t: 'Manage', w: 26, on: true, ml: 6 }, { t: 'Add-Ins', w: 38 }, { t: 'CADtools', w: 26 },
  { t: 'pyRevit', w: 38 }, { t: 'pyRevitTutor', w: 28 }, { t: 'Extensions', w: 60 }, { t: 'GeomGym', w: 14 }, { t: 'Modify', w: 54 },
];
const settings1 = [
  { n: 'materials', w: 26, l: 'Materials' }, { n: 'styles', w: 23, l: 'Object\nStyles' }, { n: 'magnet', w: 17, l: 'Snaps' },
  { n: 'info', w: 35, l: 'Project\nInformation' }, { n: 'param', w: 32, l: 'Project\nParameters' }, { n: 'shared', w: 32, l: 'Shared\nParameters' },
  { n: 'global', w: 33, l: 'Global\nParameters' }, { n: 'transfer', w: 50, l: 'Transfer\nProject Standards' },
  { n: 'purge', w: 20, l: 'Purge\nUnused' }, { n: 'units', w: 24, l: 'Project\nUnits' },
];
const settings2 = [
  { n: 'dlgBlue', w: 41, l: 'Structural\nSettings' }, { n: 'dlgLight', w: 22, l: 'MEP\nSettings' },
  { n: 'schedule', w: 54, l: 'Panel Schedule\nTemplates' }, { n: 'wrench', w: 33, l: 'Additional\nSettings' },
];
const props: { k: string; v?: string; head?: boolean; dim?: boolean; kind?: string }[] = [
  { k: 'View Scale', v: '1 : 100', kind: 'input' }, { k: 'Scale Value    1:', v: '100', dim: true }, { k: 'Display Model', v: 'Normal' },
  { k: 'Detail Level', v: 'Coarse' }, { k: 'Parts Visibility', v: 'Show Original' },
  { k: 'Visibility/Graphics Overrides', v: 'Edit...', kind: 'btn' }, { k: 'Graphic Display Options', v: 'Edit...', kind: 'btn' },
  { k: 'Orientation', v: 'Project North' }, { k: 'Wall Join Display', v: 'Clean all wall joins' }, { k: 'Discipline', v: 'Structural' },
  { k: 'Show Hidden Lines' }, { k: 'Color Scheme Location' }, { k: 'Color Scheme' }, { k: 'System Color Schemes' }, { k: 'Default Analysis Display' }, { k: 'Sun Path' },
  { k: 'Underlay', head: true }, { k: 'Range: Base Level' }, { k: 'Range: Top Level', dim: true }, { k: 'Underlay Orientation', dim: true },
  { k: 'Extents', head: true }, { k: 'Crop View' }, { k: 'Crop Region Visible' }, { k: 'Annotation Crop' }, { k: 'View Range' }, { k: 'Associated Level', dim: true },
  { k: 'Scope Box' }, { k: 'Column Symbolic Offset' }, { k: 'Depth Clipping' },
  { k: 'Identity Data', head: true }, { k: 'View Template' }, { k: 'View Name' }, { k: 'Dependency', dim: true }, { k: 'Title on Sheet' },
  { k: 'Referencing Sheet', dim: true }, { k: 'Referencing Detail', dim: true }, { k: 'Visibility' }, { k: 'Parent View', dim: true }, { k: 'Sub-discipline', dim: true }, { k: 'Id', dim: true },
  { k: 'Phasing', head: true }, { k: 'Phase Filter' }, { k: 'Phase' },
];

const Big = ({ n, w, l, ml, active, off, s = 18 }: { n: string; w: number; l: string; ml?: number; active?: boolean; off?: boolean; s?: number }) => (
  <BigBtn $w={w} $ml={ml} $active={active} $off={off}>
    <BigIcon><Ic n={n} s={s} /></BigIcon>
    <BigLabel>{l}</BigLabel>
  </BigBtn>
);

const Tree = ({ names }: { names: { t: string; dim?: boolean }[] }) => (
  <>{names.map(i => <TreeItem key={i.t} $dim={i.dim}><Tri />{i.t}</TreeItem>)}</>
);

export default function App() {
  return (
    <Slide>
      <Global />
      <Stage>
        <Brand>
          <PythonLogo />
          <BrandWord>python</BrandWord>
        </Brand>
        <Shot>
          <AppButton>R<AppCaret /></AppButton>
          <TitleBar>
            <Quick>
              <Ic n="folder" s={9} /><Ic n="disk" s={9} /><Ic n="sync" s={9} /><QuickDot />
              <Ic n="undo" s={9} /><QuickDot /><Ic n="redo" s={9} /><QuickDot />
              <Ic n="thick" s={9} /><QuickDot /><Ic n="line" s={9} /><Ic n="mag" s={9} />
              <QuickA>A</QuickA>
              <Ic n="gear" s={9} /><QuickDot /><Ic n="diamond" s={9} /><Ic n="switch" s={10} /><Ic n="delete" s={9} /><Ic n="windows" s={9} /><QuickDot /><QuickDot />
            </Quick>
            <Glass>{'Autodesk Revit 2017.2 -    Project1 - Structural Plan: Wo - Level 00 - G.A. Site Plan'}</Glass>
            <SearchWrap>
              <SearchArrow />
              <SearchBox>Type a keyword or phrase</SearchBox>
              <TopIcons>
                <Ic n="binocs" s={9} /><Ic n="sat" s={9} /><Ic n="star" s={9} /><Ic n="person" s={9} />
              </TopIcons>
              <SignIn>Sign In</SignIn>
              <TinyCaret />
              <Ic n="xx" s={7} />
              <Spacer $w={12} />
              <Ic n="help" s={9} />
              <WinButtons>
                <WinBtn $w={16}>–</WinBtn><WinBtn $w={11}>□</WinBtn><WinBtn $w={24} $red>×</WinBtn>
              </WinButtons>
            </SearchWrap>
          </TitleBar>
          <TabBar>
            {tabs.map(t => <Tab key={t.t} $w={t.w} $on={t.on} $ml={t.ml}>{t.t}</Tab>)}
            <Tab $w={14}>▭▾</Tab>
          </TabBar>
          <Ribbon>
            <Panel $w={29}>
              <PanelBody><Big n="cursor" w={21} ml={4} l="Modify" active s={13} /></PanelBody>
              <PanelTitle $left>Select ▾</PanelTitle>
            </Panel>
            <Panel $w={448}>
              <PanelBody>
                {settings1.map(i => <Big key={i.l} n={i.n} w={i.w} l={i.l} />)}
                <RibbonSep />
                {settings2.map(i => <Big key={i.l} n={i.n} w={i.w} l={i.l} />)}
              </PanelBody>
              <PanelTitle>Settings</PanelTitle>
            </Panel>
            <Panel $w={53}>
              <PanelBody>
                <SmallCol $w={52} $ml={2}>
                  <SmallRow><Ic n="location" />Location</SmallRow>
                  <SmallRow><Coords />Coordinates ▾</SmallRow>
                  <SmallRow><Ic n="position" />Position ▾</SmallRow>
                </SmallCol>
              </PanelBody>
              <PanelTitle>Project Location</PanelTitle>
            </Panel>
            <Panel $w={102}>
              <PanelBody>
                <Big n="dlgBlue" w={26} l={'Design\nOptions'} s={17} />
                <SmallCol $w={74} $ml={1}>
                  <SmallRow $off><Ic n="addset" />Add to Set</SmallRow>
                  <SmallRow $off><Ic n="addset" />Pick to Edit</SmallRow>
                  <Combo>Main Model<span>▾</span></Combo>
                </SmallCol>
              </PanelBody>
              <PanelTitle>Design Options</PanelTitle>
            </Panel>
            <Panel $w={85}>
              <PanelBody>
                <Big n="param" w={25} l={'Manage\nLinks'} s={16} />
                <SmallCol $w={58} $ml={2}>
                  <SmallRow><Ic n="picture" />Manage Images</SmallRow>
                  <SmallRow><Ic n="decal" />Decal Types</SmallRow>
                  <SmallRow><Ic n="camera2" />Starting View</SmallRow>
                </SmallCol>
              </PanelBody>
              <PanelTitle>Manage Project</PanelTitle>
            </Panel>
            <Panel $w={28}>
              <PanelBody><Big n="phases" w={27} l={'\nPhases'} s={16} /></PanelBody>
              <PanelTitle>Phasing</PanelTitle>
            </Panel>
            <Panel $w={27}>
              <PanelBody>
                <SmallCol $w={26} $ml={1}>
                  <SmallRow $off><Ic n="save" />Save</SmallRow>
                  <SmallRow $off><Ic n="save" />Load</SmallRow>
                  <SmallRow><Ic n="edit" />Edit</SmallRow>
                </SmallCol>
              </PanelBody>
              <PanelTitle>Selection</PanelTitle>
            </Panel>
            <Panel $w={62}>
              <PanelBody>
                <SmallCol $w={60} $ml={3}>
                  <SmallRow $off><Ic n="ids" />IDs of Selection</SmallRow>
                  <SmallRow><Ic n="selId" />Select by ID</SmallRow>
                  <SmallRow $off><Ic n="warn" />Warnings</SmallRow>
                </SmallCol>
              </PanelBody>
              <PanelTitle>Inquiry</PanelTitle>
            </Panel>
            <Panel $w={56}>
              <PanelBody>
                <Big n="dynamo" w={29} l={'\nDynamo'} off s={16} />
                <Big n="player" w={25} l={'Dynamo\nPlayer'} s={16} />
              </PanelBody>
              <PanelTitle>Visual Programming</PanelTitle>
            </Panel>
            <Panel $w={55}>
              <PanelBody>
                <Big n="macro" w={29} l={'Macro\nManager'} s={16} />
                <Big n="shield" w={23} l={'Macro\nSecurity'} s={16} />
              </PanelBody>
              <PanelTitle>Macros</PanelTitle>
            </Panel>
            <RibbonEnd />
          </Ribbon>
          <Band />
          <Work>
            <Props>
              <PropsHead>Properties<span style={{ fontWeight: 700, fontSize: 7 }}>×</span></PropsHead>
              <TypeBox>
                <TypeThumb><Ic n="windows" s={16} /></TypeThumb>
                <TypeText>Structural Plan<br />10 - Wo - G.A. Site Plan</TypeText>
                <Caret />
              </TypeBox>
              <TypeRow>
                <TypeSelect>Structural Plan: Wo - Level 00 - G.A. Site Plan<Caret /></TypeSelect>
                <EditType><Ic n="ids" s={8} />Edit Type</EditType>
              </TypeRow>
              <PropList>
                <Head>Graphics<span>≑</span></Head>
                {props.map(p => p.head
                  ? <Head key={p.k}>{p.k}</Head>
                  : (
                    <Row key={p.k}>
                      <PropKey $dim={p.dim}>{p.k}</PropKey>
                      <PropVal $dim={p.dim} $kind={p.kind}>{p.v}</PropVal>
                      <span />
                    </Row>
                  ))}
              </PropList>
              <PropFoot>
                <HelpLink>Properties help</HelpLink>
                <Apply>Apply</Apply>
              </PropFoot>
            </Props>
            <Split />
            <View>
              <CanvasRow>
                <Canvas>
                  <GridPlan />
                  <MiniCtl>
                    <MiniBar />
                    <Ic n="windows" s={6} /><Ic n="xx" s={5} />
                  </MiniCtl>
                  <NavBar>
                    <Ic n="navWheel" s={13} />
                    <NavCaret />
                    <NavSep />
                    <Ic n="navZoom" s={11} />
                    <NavCaret />
                  </NavBar>
                </Canvas>
                <VScroll><ArrowUp /><VThumb /><ArrowDn /></VScroll>
              </CanvasRow>
              <ViewBar>
                <ViewCtl>
                  <ScaleText>1 : 100</ScaleText>
                  <Ic n="plan" s={9} /><Ic n="layers" s={9} /><Ic n="sun" s={9} /><Ic n="blueEye" s={9} /><Ic n="blueEye" s={9} />
                  <Ic n="blueEye" s={9} /><Ic n="dim" s={9} /><Ic n="bulb" s={9} /><Ic n="car" s={9} /><Ic n="car" s={9} /><Ic n="plan" s={9} />
                </ViewCtl>
                <HTrack><HThumb /><HRight /></HTrack>
              </ViewBar>
            </View>
          </Work>
          <Status>
            <StatusText>Click to select, TAB for alternates, CTRL adds, SHIFT unselects.</StatusText>
            <Ic n="warn" s={8} />
            <StatusCombo $w={104}><span /><span>▾</span></StatusCombo>
            <StatusIcons $ml={5}><Ic n="line" s={7} />:0</StatusIcons>
            <StatusIcons $ml={13}><Ic n="plan" s={8} /><Ic n="ids" s={8} /></StatusIcons>
            <StatusCombo $w={105}>Main Model<span>▾</span></StatusCombo>
            <StatusIcons $ml={111}>
              <Ic n="trophy" s={9} /><Ic n="delete" s={9} /><Ic n="redBox" s={9} /><Ic n="delete" s={9} /><Ic n="undo" s={9} /><Ic n="gear" s={9} /><Ic n="filter" s={9} />:0
            </StatusIcons>
          </Status>
          <Taskbar>
            <Start><Ic n="startOrb" s={17} /></Start>
            <TaskIcons>
              {TASK.map((t, i) => (
                <TaskSlot key={i}><svg width={16} height={16} viewBox="0 0 24 24">{t}</svg></TaskSlot>
              ))}
            </TaskIcons>
            <Tray>
              <SmallGlyph>▴</SmallGlyph><span>⚑</span><span>▣</span><span>▭</span><TrayRed>◖</TrayRed>
              <Clock>15:17<br />14/09/2017</Clock>
            </Tray>
          </Taskbar>

          <DynWin>
            <DynTitle>
              <DynR>R</DynR>Dynamo
              <DynBtns>
                <WinBtn $w={13}>–</WinBtn><WinBtn $w={13}>□</WinBtn><WinBtn $w={24} $red>×</WinBtn>
              </DynBtns>
            </DynTitle>
            <DynMenu>
              <MenuItem $w={25}>File</MenuItem><MenuItem $w={25}>Edit</MenuItem><MenuItem $w={28}>View</MenuItem>
              <MenuItem $w={38}>Packages</MenuItem><MenuItem $w={38}>Settings</MenuItem><MenuItem $w={26}>Help</MenuItem>
              <Status2><Dot $c="#cfd4c8" /><Dot $c="#6fbf5f" /><Dot $c="#6fbf5f" /></Status2>
            </DynMenu>
            <DynTools>
              <svg width={8} height={8} viewBox="0 0 24 24"><path d="M4 1h11l5 6v16H4z" fill="#8a8a8a" /></svg>
              <svg width={8} height={8} viewBox="0 0 24 24"><path d="M2 8h6l2-4h12l-2 4v14H2z" fill="#8a8a8a" /></svg>
              <svg width={8} height={8} viewBox="0 0 24 24"><rect x="3" y="3" width="18" height="18" fill="none" stroke="#8a8a8a" strokeWidth="3" /><path d="M3 12h18" stroke="#8a8a8a" strokeWidth="3" /></svg>
              <svg width={8} height={8} viewBox="0 0 24 24"><path d="M21 20C19 12 13 10 8 11V6L1 12l7 7v-5c5 0 9 1 13 6z" fill="#8a8a8a" /></svg>
              <svg width={8} height={8} viewBox="0 0 24 24"><path d="M3 20C5 12 11 10 16 11V6l7 6-7 7v-5c-5 0-9 1-13 6z" fill="#444" /></svg>
              <ToolEnd>
                <svg width={10} height={9} viewBox="0 0 24 20"><path d="M2 5h5l2-3h6l2 3h5v14H2z" fill="#8a8a8a" /><circle cx="12" cy="11" r="4" fill="#2b2b2b" /></svg>
              </ToolEnd>
            </DynTools>
            <DynMain>
              <Library>
                <LibHead>Library<LibTools>| ▾ | ≡ | ◂|</LibTools></LibHead>
                <LibSearch>
                  <svg width={6} height={6} viewBox="0 0 24 24"><circle cx="10" cy="10" r="7" fill="none" stroke="#444" strokeWidth="4" /><path d="M15 15l7 7" stroke="#444" strokeWidth="4" /></svg>
                  Search
                </LibSearch>
                <LibList>
                  <TreeGroup $n={5} $mt={-6.7}>
                    <Tree names={[{ t: 'Element Properties' }, { t: 'Enums' }, { t: 'Modify' }, { t: 'Printing' }, { t: 'Strings' }]} />
                  </TreeGroup>
                  <TreeGroup $n={5} $mt={7.9}>
                    <Tree names={[{ t: 'CSV', dim: true }, { t: 'Elements', dim: true }, { t: 'Excel', dim: true }, { t: 'List', dim: true }]} />
                    <TreeItem $dim><Tri $open />Selection</TreeItem>
                  </TreeGroup>
                  <SubGroup><SubStub /><Tri />Select</SubGroup>
                  <LeafRow>
                    <svg width={11} height={11} viewBox="0 0 24 24"><path d="M9 2h6v4h7v7h-4v3h4v6h-7v-4H9v4H3v-7h3v-3H3V6h6z" fill="none" stroke="#3f78b0" strokeWidth="3" /></svg>
                    Id to Element
                  </LeafRow>
                  <TreeGroup $n={1}><TreeItem $dim><Tri />Views</TreeItem></TreeGroup>
                </LibList>
              </Library>
              <DynCanvasCol>
                <DynTabs>
                  <DynTab>Grid Bubble End.dyn*<TabClose>×</TabClose></DynTab>
                  <Burger />
                </DynTabs>
                <Graph>
                  <ToggleBar>
                    <svg width={18} height={8} viewBox="0 0 36 16"><circle cx="7" cy="9" r="6" fill="none" stroke="#999" strokeWidth="1.6" /><path d="M12 14 L18 3 L24 14Z" fill="none" stroke="#999" strokeWidth="1.6" /><rect x="26" y="3" width="9" height="10" fill="none" stroke="#999" strokeWidth="1.6" /></svg>
                    <svg width={20} height={9} viewBox="0 0 40 18"><rect x="1" y="1" width="13" height="6" fill="#9ad0f2" stroke="#2a95dc" strokeWidth="1.6" /><rect x="9" y="11" width="12" height="6" fill="#9ad0f2" stroke="#2a95dc" strokeWidth="1.6" /><rect x="26" y="5" width="13" height="7" fill="#9ad0f2" stroke="#2a95dc" strokeWidth="1.6" /><path d="M14 4 L26 8 M21 14 L26 9" stroke="#2a95dc" strokeWidth="1.4" /></svg>
                  </ToggleBar>
                  <ZoomCol $y={20} $h={37}>
                    <svg width={8} height={8} viewBox="0 0 24 24"><path d="M2 8V2h6M16 2h6v6M22 16v6h-6M8 22H2v-6" fill="none" stroke="#666" strokeWidth="2.6" /></svg>
                    <span>+</span><span>-</span>
                  </ZoomCol>
                  <ZoomCol $y={59} $h={13}>
                    <svg width={8} height={8} viewBox="0 0 24 24"><path d="M12 1 L16 6 H13.5 V10.5 H18 V8 L23 12 L18 16 V13.5 H13.5 V18 H16 L12 23 L8 18 H10.5 V13.5 H6 V16 L1 12 L6 8 V10.5 H10.5 V6 H8Z" fill="#666" /></svg>
                  </ZoomCol>
                  <Wire viewBox="0 0 264 212"><path d="M102 106 C 130 106, 136 73, 168 73" fill="none" stroke="#333" strokeWidth="1.3" /></Wire>
                  <Node $x={18} $y={87} $w={84} $h={50} $bg="#fdd588" $line="#6d6450">
                    <NodeHead $bg="#4d4538" $c="#f2f2f2" $bold>Select Model Elements</NodeHead>
                    <NodePorts>
                      <ChangeBtn>Change</ChangeBtn>
                      <Port $w={33} $bg="#fce8bf" $c="#665">Elements</Port>
                    </NodePorts>
                    <NodeNote>Nothing selected.</NodeNote>
                  </Node>
                  <Bubble><BubbleLine $w={8} /><BubbleLine $w={5} /></Bubble>
                  <Node $x={168} $y={54} $w={60} $h={37} $bg="#fdd588" $line="#8a7d62">
                    <NodeHead $bg="#4d4538" $c="#f2f2f2" $bold>End0</NodeHead>
                    <NodePorts>
                      <Port $w={19} $bg="#fce8bf" $c="#665">IN[0]</Port>
                      <Port $w={10} $ml={1} $bg="#fce8bf" $c="#554">+</Port>
                      <Port $w={10} $ml={1} $bg="#fce8bf" $c="#554">-</Port>
                      <Port $w={17} $ml={1} $bg="#fce8bf" $c="#665">OUT</Port>
                    </NodePorts>
                  </Node>
                  <Node $x={168} $y={122} $w={60} $h={37} $bg="#d9d1c8" $line="#b3aaa0">
                    <NodeHead $bg="#c3bab0" $c="#555">End1</NodeHead>
                    <NodePorts>
                      <Port $w={19} $bg="#efefef" $c="#777">IN[0]</Port>
                      <Port $w={10} $ml={1} $bg="#efefef" $c="#666">+</Port>
                      <Port $w={10} $ml={1} $bg="#efefef" $c="#666">-</Port>
                      <Port $w={17} $ml={1} $bg="#efefef" $c="#777">OUT</Port>
                    </NodePorts>
                  </Node>
                  <Preview>StructuralPlanView(Name = Wo - Level 00 - G.A. Site Plan)</Preview>
                  <CursorMark width={8} height={11} viewBox="0 0 12 18"><path d="M1 1 V14 L4 11 L7 17 L9 16 L6 10 L11 10 Z" fill="#fff" stroke="#333" strokeWidth="1.2" /></CursorMark>
                </Graph>
              </DynCanvasCol>
            </DynMain>
            <DynBottom>
              <ManualBtn>Manual<SmallGlyph>▾</SmallGlyph></ManualBtn>
              <RunBtn>Run</RunBtn>
              <RunMsg>Run completed with warnings.</RunMsg>
              <Grip width={6} height={6} viewBox="0 0 6 6"><path d="M5 1v4H1z" fill="#888" /></Grip>
            </DynBottom>
          </DynWin>
        </Shot>
      </Stage>
      <Footer>
        <PageNo>26</PageNo>
        <Arup>ARUP</Arup>
      </Footer>
    </Slide>
  );
}
